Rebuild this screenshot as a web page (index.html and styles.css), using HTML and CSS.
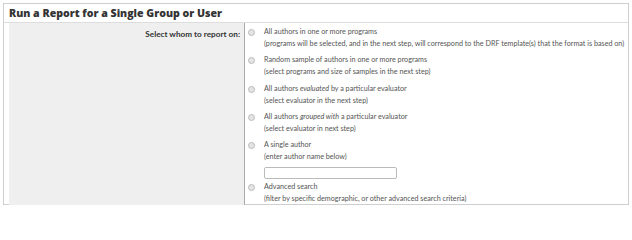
FILE: index.html
```html
<!DOCTYPE html>
<html>
<head>
<meta charset="utf-8">
<link rel="stylesheet" href="styles.css">
</head>
<body>
<div class="panel">
  <div class="title">Run a Report for a Single Group or User</div>
  <div class="form">
    <div class="label-cell">Select whom to report on:</div>
    <div class="options">
      <div class="option">
        <span class="radio"></span>
        <div class="text">
          <div>All authors in one or more programs</div>
          <div>(programs will be selected, and in the next step, will correspond to the DRF template(s) that the format is based on)</div>
        </div>
      </div>
      <div class="option">
        <span class="radio"></span>
        <div class="text">
          <div>Random sample of authors in one or more programs</div>
          <div>(select programs and size of samples in the next step)</div>
        </div>
      </div>
      <div class="option">
        <span class="radio"></span>
        <div class="text">
          <div>All authors <em>evaluated</em> by a particular evaluator</div>
          <div>(select evaluator in the next step)</div>
        </div>
      </div>
      <div class="option">
        <span class="radio"></span>
        <div class="text">
          <div>All authors <em>grouped with</em> a particular evaluator</div>
          <div>(select evaluator in next step)</div>
        </div>
      </div>
      <div class="option">
        <span class="radio"></span>
        <div class="text">
          <div>A single author</div>
          <div>(enter author name below)</div>
          <div class="input"></div>
        </div>
      </div>
      <div class="option">
        <span class="radio"></span>
        <div class="text">
          <div>Advanced search</div>
          <div>(filter by specific demographic, or other advanced search criteria)</div>
        </div>
      </div>
    </div>
  </div>
</div>
</body>
</html>
```
FILE: styles.css
```css
html, body {
  margin: 0;
  padding: 0;
  background: #fff;
}
.panel {
  margin: 3px 0 0 3px;
  width: 624px;
  height: 200px;
  border: 1px solid #cfcfcf;
  display: flex;
  flex-direction: column;
}
.title {
  height: 18px;
  padding-left: 5px;
  font-family: "Open Sans", Lato, sans-serif;
  font-weight: 800;
  font-size: 10.6px;
  line-height: 19px;
  color: #333;
  border-bottom: 1px solid #ddd;
}
.form {
  flex: 1;
  margin-left: 5px;
  margin-bottom: 1px;
  display: grid;
  grid-template-columns: 236px 1fr;
  border-bottom: 1px solid #ddd;
}
.label-cell {
  background: #efefef;
  border-right: 1px solid #aaa;
  text-align: right;
  padding: 5px 4px 0 0;
  font-family: Lato, "Open Sans", sans-serif;
  font-weight: 700;
  font-size: 8.2px;
  line-height: 12px;
  color: #333;
}
.options {
  padding: 3px 0 0 3px;
  display: flex;
  flex-direction: column;
  gap: 4.25px;
}
.option {
  display: flex;
  gap: 9px;
  align-items: flex-start;
}
.radio {
  flex: none;
  width: 5px;
  height: 5px;
  margin-top: 3px;
  border-radius: 50%;
  border: 1px solid #bbb;
  background: #e4e4e4;
}
.text {
  font-family: Lato, "Open Sans", sans-serif;
  font-size: 7.2px;
  line-height: 12px;
  color: #555;
}
.input {
  width: 131px;
  height: 10px;
  margin: 4px 0 -2px 0;
  border: 1px solid #bbb;
  border-radius: 2px;
  background: #fff;
}
```
